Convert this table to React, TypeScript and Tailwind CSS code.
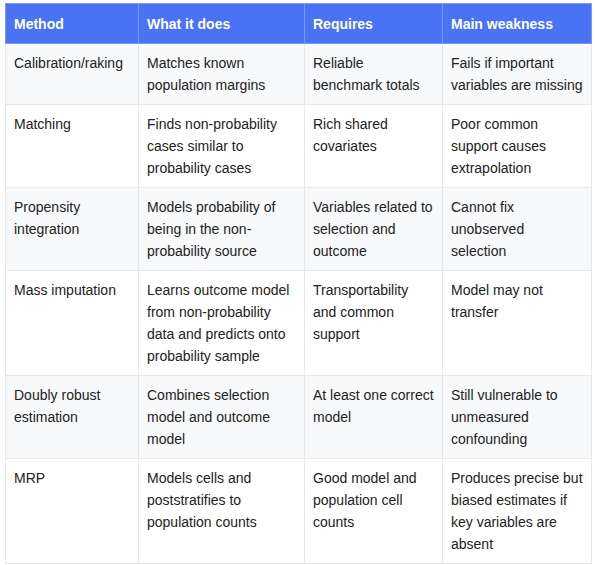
const rows = [
  ["Calibration/raking", "Matches known population margins", "Reliable benchmark totals", "Fails if important variables are missing"],
  ["Matching", "Finds non-probability cases similar to probability cases", "Rich shared covariates", "Poor common support causes extrapolation"],
  ["Propensity integration", "Models probability of being in the non-probability source", "Variables related to selection and outcome", "Cannot fix unobserved selection"],
  ["Mass imputation", "Learns outcome model from non-probability data and predicts onto probability sample", "Transportability and common support", "Model may not transfer"],
  ["Doubly robust estimation", "Combines selection model and outcome model", "At least one correct model", "Still vulnerable to unmeasured confounding"],
  ["MRP", "Models cells and poststratifies to population counts", "Good model and population cell counts", "Produces precise but biased estimates if key variables are absent"],
];

const headers = ["Method", "What it does", "Requires", "Main weakness"];

// right padding per column, tuned so lines wrap where the reference wraps
const padRight = ["pr-[8px]", "pr-[11px]", "pr-[7px]", "pr-[8px]"];

export default function App() {
  return (
    <div className="bg-white pl-[5px] pt-[3px] w-[595px] h-[565px] overflow-hidden font-['Liberation_Sans',Arial,sans-serif]">
      <table className="table-fixed border-collapse w-[586px] text-[14px] leading-[22px] text-[#222]">
        <colgroup>
          <col className="w-[133px]" />
          <col className="w-[166px]" />
          <col className="w-[138px]" />
          <col className="w-[149px]" />
        </colgroup>
        <thead>
          <tr className="bg-[#4a72f5] text-white">
            {headers.map((h, j) => (
              <th
                key={h}
                className={`h-[40px] pl-[8px] ${padRight[j]} text-left align-middle font-bold border border-[#7b98f5]`}
              >
                {h}
              </th>
            ))}
          </tr>
        </thead>
        <tbody>
          {rows.map((r, i) => (
            <tr key={i} className={i % 2 === 0 ? "bg-[#f8f9fa]" : "bg-white"}>
              {r.map((c, j) => (
                <td
                  key={j}
                  className={`pl-[8px] ${padRight[j]} pt-[8px] pb-[8px] align-top border border-[#e6e8eb]`}
                >
                  {c}
                </td>
              ))}
            </tr>
          ))}
        </tbody>
      </table>
    </div>
  );
}
